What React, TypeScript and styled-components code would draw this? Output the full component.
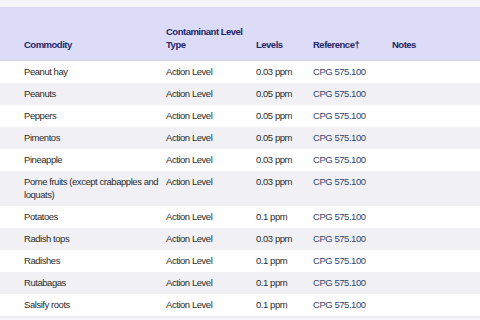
import React from 'react';
import styled, { createGlobalStyle } from 'styled-components';

const GlobalStyle = createGlobalStyle`
    html, body {
        margin: 0;
        padding: 0;
        background: #ffffff;
    }
    body {
        font-family: "Liberation Sans", Arial, sans-serif;
    }
`;

const Page = styled.div`
    width: 480px;
    height: 320px;
    overflow: hidden;
    padding-top: 7px;
    box-sizing: border-box;
    background: #f6f6fa;
`;

const Table = styled.div`
    display: flex;
    flex-direction: column;
    background: #ffffff;
    border-bottom: 2px solid #ececf0;
`;

const columns = '142px 90px 57px 79px 1fr';

const HeaderRow = styled.div`
    display: grid;
    grid-template-columns: ${columns};
    align-items: end;
    height: 54px;
    box-sizing: border-box;
    padding: 0 0 9px 24px;
    background: #dcdcf9;
    border-bottom: 1px solid #cfd0ee;
`;

const HeaderCell = styled.div`
    font-size: 9.5px;
    font-weight: 700;
    line-height: 13px;
    letter-spacing: -0.5px;
    color: #1f2668;
    padding-right: 4px;
`;

const Row = styled.div<{ $shaded: boolean }>`
    display: grid;
    grid-template-columns: ${columns};
    align-items: start;
    padding: 4px 0 5px 24px;
    background: ${(p) => (p.$shaded ? '#f1f1f5' : '#ffffff')};
`;

const Cell = styled.div`
    font-size: 9.5px;
    line-height: 13px;
    letter-spacing: -0.45px;
    color: #2b2b2b;
    padding-right: 3px;
`;

const RefCell = styled(Cell)`
    color: #34446e;
`;

interface Entry {
    commodity: string;
    level: string;
}

const entries: Entry[] = [
    { commodity: 'Peanut hay', level: '0.03 ppm' },
    { commodity: 'Peanuts', level: '0.05 ppm' },
    { commodity: 'Peppers', level: '0.05 ppm' },
    { commodity: 'Pimentos', level: '0.05 ppm' },
    { commodity: 'Pineapple', level: '0.03 ppm' },
    { commodity: 'Pome fruits (except crabapples and loquats)', level: '0.03 ppm' },
    { commodity: 'Potatoes', level: '0.1 ppm' },
    { commodity: 'Radish tops', level: '0.03 ppm' },
    { commodity: 'Radishes', level: '0.1 ppm' },
    { commodity: 'Rutabagas', level: '0.1 ppm' },
    { commodity: 'Salsify roots', level: '0.1 ppm' },
];

const App: React.FC = () => {
    return (
        <>
            <GlobalStyle />
            <Page>
                <Table>
                    <HeaderRow>
                        <HeaderCell>Commodity</HeaderCell>
                        <HeaderCell>Contaminant Level Type</HeaderCell>
                        <HeaderCell>Levels</HeaderCell>
                        <HeaderCell>Reference†</HeaderCell>
                        <HeaderCell>Notes</HeaderCell>
                    </HeaderRow>

                    {entries.map((item, i) => (
                        <Row key={item.commodity} $shaded={i % 2 === 1}>
                            <Cell>{item.commodity}</Cell>
                            <Cell>Action Level</Cell>
                            <Cell>{item.level}</Cell>
                            <RefCell>CPG 575.100</RefCell>
                            <Cell />
                        </Row>
                    ))}
                </Table>
            </Page>
        </>
    );
};

export default App;
